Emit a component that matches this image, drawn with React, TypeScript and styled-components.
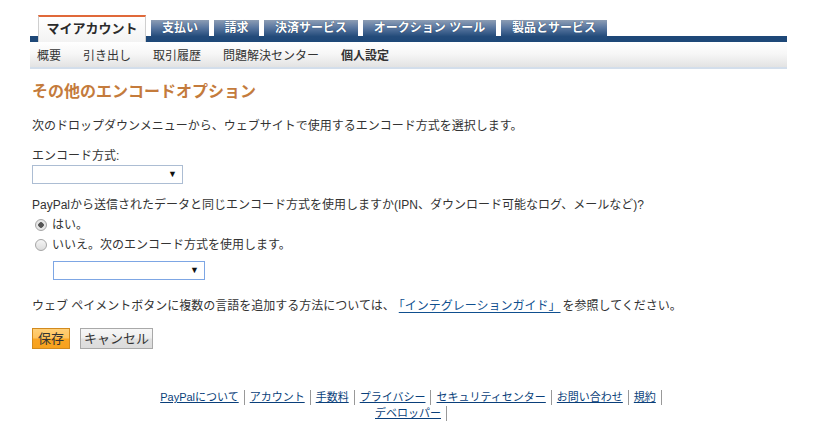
import React from 'react'
import { styled, createGlobalStyle } from 'styled-components'

const GlobalStyle = createGlobalStyle`
  body {
    margin: 0;
    background: #fff;
    font-family: "Liberation Sans", "Noto Sans CJK JP", sans-serif;
    color: #333;
  }
`

const tabs = [
  { label: 'マイアカウント', width: 108, active: true },
  { label: '支払い', width: 58 },
  { label: '請求', width: 45 },
  { label: '決済サービス', width: 94 },
  { label: 'オークション ツール', width: 133 },
  { label: '製品とサービス', width: 106 },
]

const subItems = ['概要', '引き出し', '取引履歴', '問題解決センター', '個人設定']

const footerLinks = [
  'PayPalについて',
  'アカウント',
  '手数料',
  'プライバシー',
  'セキュリティセンター',
  'お問い合わせ',
  '規約',
  'デベロッパー',
]

export default function App() {
  return (
    <Page>
      <GlobalStyle />
      <TabRow>
        {tabs.map((t) => (
          <Tab key={t.label} $active={!!t.active} $w={t.width}>
            {t.label}
          </Tab>
        ))}
      </TabRow>
      <SubNav>
        {subItems.map((s, i) => (
          <SubItem key={s} $current={i === subItems.length - 1}>
            {s}
          </SubItem>
        ))}
      </SubNav>

      <Content>
        <Heading>その他のエンコードオプション</Heading>
        <Text>次のドロップダウンメニューから、ウェブサイトで使用するエンコード方式を選択します。</Text>
        <Label>エンコード方式:</Label>
        <SelectBox>
          <Arrow>▼</Arrow>
        </SelectBox>

        <Question>PayPalから送信されたデータと同じエンコード方式を使用しますか(IPN、ダウンロード可能なログ、メールなど)?</Question>
        <RadioRow>
          <Radio $checked />
          はい。
        </RadioRow>
        <RadioRow>
          <Radio />
          いいえ。次のエンコード方式を使用します。
        </RadioRow>
        <SelectBox $focus>
          <Arrow>▼</Arrow>
        </SelectBox>

        <Info>
          ウェブ ペイメントボタンに複数の言語を追加する方法については、
          <GuideLink href="#">「インテグレーションガイド」</GuideLink>を参照してください。
        </Info>

        <Buttons>
          <Button $primary>保存</Button>
          <Button>キャンセル</Button>
        </Buttons>
      </Content>

      <Footer>
        {footerLinks.map((f) => (
          <FooterItem key={f}>
            <FooterLink href="#">{f}</FooterLink>
          </FooterItem>
        ))}
      </Footer>
    </Page>
  )
}

const Page = styled.div`
  width: 757px;
  margin-left: 30px;
  padding-top: 15px;
  padding-bottom: 10px;
`

// 下の紺色バーは行の背景で描く
const TabRow = styled.div`
  display: flex;
  align-items: flex-end;
  gap: 5px;
  height: 27px;
  padding-left: 8px;
  background: linear-gradient(transparent 21px, #1e4878 21px);
`

const Tab = styled.div<{ $active: boolean; $w: number }>`
  box-sizing: border-box;
  width: ${(p) => p.$w}px;
  text-align: center;
  white-space: nowrap;
  font-size: ${(p) => (p.$active ? 13 : 12)}px;
  font-weight: bold;
  ${(p) =>
    p.$active
      ? `
    height: 27px;
    line-height: 22px;
    padding-top: 1px;
    border-top: 2px solid #e0693a;
    border-left: 1px solid #cfcfcf;
    border-right: 1px solid #cfcfcf;
    background: linear-gradient(#ffffff, #f3f3f3);
    color: #2b2b2b;
  `
      : `
    height: 22px;
    line-height: 17px;
    color: #fff;
    text-shadow: 0 0 1px #0d2a4d;
    background: linear-gradient(#8d9db4 0%, #5a77a0 35%, #234b7a 75%, #1e4878 100%);
  `}
`

const SubNav = styled.div`
  display: flex;
  align-items: center;
  gap: 22px;
  height: 25px;
  padding-left: 7px;
  background: linear-gradient(#ffffff, #f7f7f7 45%, #e3e3e3);
  border-bottom: 2px solid #d3deeb;
`

const SubItem = styled.span<{ $current: boolean }>`
  font-size: 12px;
  color: #333;
  font-weight: ${(p) => (p.$current ? 'bold' : 'normal')};
`

const Content = styled.div`
  padding-left: 2px;
  font-size: 12px;
  line-height: 18px;
`

const Heading = styled.h1`
  margin: 13px 0 0;
  font-size: 16px;
  line-height: 20px;
  font-weight: bold;
  color: #c47b3c;
`

const Text = styled.p`
  margin: 15px 0 0;
`

const Label = styled.div`
  margin-top: 12px;
`

const SelectBox = styled.div<{ $focus?: boolean }>`
  box-sizing: border-box;
  width: ${(p) => (p.$focus ? 152 : 151)}px;
  height: 19px;
  display: flex;
  align-items: center;
  justify-content: flex-end;
  padding-right: 5px;
  border: 1px solid ${(p) => (p.$focus ? '#7da6e4' : '#acbdd3')};
  background: #fff;
  margin-left: ${(p) => (p.$focus ? 21 : 0)}px;
  margin-top: ${(p) => (p.$focus ? 7 : 0)}px;
`

const Arrow = styled.span`
  font-size: 9px;
  line-height: 9px;
  color: #111;
`

const Question = styled.p`
  margin: 12px 0 0;
`

const RadioRow = styled.label`
  display: flex;
  align-items: center;
  gap: 5px;
  margin-top: 2px;
  padding-left: 3px;
  color: #333;
`

const Radio = styled.span<{ $checked?: boolean }>`
  box-sizing: border-box;
  width: 12px;
  height: 12px;
  border-radius: 50%;
  border: 1px solid #a5a5a5;
  background: ${(p) =>
    p.$checked
      ? 'radial-gradient(circle, #555 0, #555 2.5px, #e6e6e6 3px)'
      : 'linear-gradient(#f5f5f5, #dcdcdc)'};
`

const Info = styled.p`
  margin: 17px 0 0;
`

const GuideLink = styled.a`
  color: #0f4f8f;
  text-decoration: underline;
  text-underline-offset: 2px;
  margin: 0 2px 0 4px;
`

const Buttons = styled.div`
  display: flex;
  gap: 10px;
  margin-top: 13px;
`

const Button = styled.button<{ $primary?: boolean }>`
  box-sizing: border-box;
  height: 21px;
  padding: 0 ${(p) => (p.$primary ? 5 : 3)}px;
  font-family: inherit;
  font-size: 13px;
  line-height: 19px;
  color: #333;
  border: 1px solid ${(p) => (p.$primary ? '#d28a1e' : '#a9a9a9')};
  background: ${(p) =>
    p.$primary
      ? 'linear-gradient(#ffcf77 0%, #ffc45e 45%, #f9a423 55%, #f7a21d 100%)'
      : 'linear-gradient(#f7f7f7 0%, #efefef 45%, #e0e0e0 55%, #dcdcdc 100%)'};
`

const Footer = styled.div`
  width: 520px;
  margin: 41px auto 0;
  display: flex;
  flex-wrap: wrap;
  justify-content: center;
  font-size: 11px;
  line-height: 15px;
`

const FooterItem = styled.span`
  padding: 0 5px;
  border-right: 1px solid #999;
  margin-bottom: 1px;
`

const FooterLink = styled.a`
  color: #0a3f7a;
  text-decoration: underline;
`
